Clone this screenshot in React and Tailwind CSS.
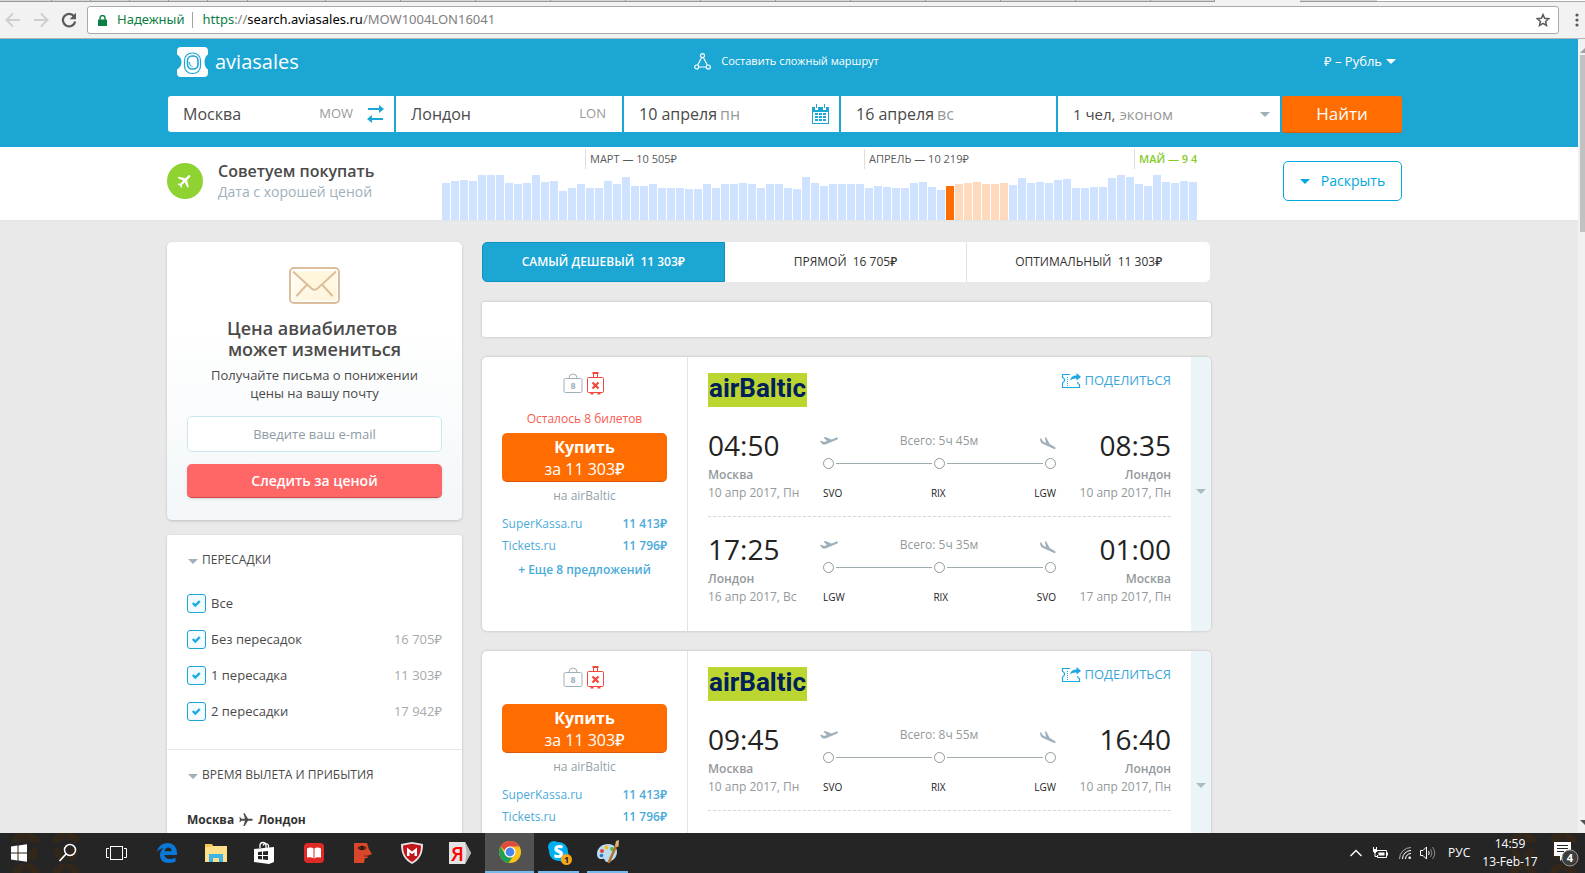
import React from "react";
import clsx from "clsx";

// Bar heights of the price calendar, one per day
const PRICE_BARS = [
  37, 39, 40, 39, 45, 45, 45, 37, 36, 37, 45, 38, 39, 29, 32, 36, 32, 32, 39, 36, 43,
  34, 34, 36, 32, 32, 32, 31, 31, 36, 32, 36, 36, 37, 36, 32, 36, 36, 32, 31, 43, 37,
  34, 36, 36, 36, 36, 32, 34, 33, 32, 32, 37, 38, 33, 30, 34, 36, 37, 38, 36, 36, 37,
  35, 42, 37, 38, 37, 40, 41, 32, 32, 33, 33, 42, 45, 43, 36, 34, 45, 38, 37, 39, 38,
];
const SELECTED_DAY = 56;
const TRIP_LENGTH = 6;

const BROWSER_TABS = [52, 39, 39, 39, 39, 40, 78, 75, 75, 75, 75, 75, 75, 75, 75, 75, 75, 75, 64];

const STOPS = [
  { id: "all", label: "Все" },
  { id: "direct", label: "Без пересадок", price: "16\u00a0705₽" },
  { id: "one", label: "1 пересадка", price: "11\u00a0303₽" },
  { id: "two", label: "2 пересадки", price: "17\u00a0942₽" },
];

const TICKETS = [
  {
    id: 1,
    left: "Осталось 8 билетов",
    segments: [
      {
        from: { time: "04:50", city: "Москва", date: "10 апр 2017, Пн" },
        to: { time: "08:35", city: "Лондон", date: "10 апр 2017, Пн" },
        total: "Всего: 5ч 45м",
        codes: ["SVO", "RIX", "LGW"],
      },
      {
        from: { time: "17:25", city: "Лондон", date: "16 апр 2017, Вс" },
        to: { time: "01:00", city: "Москва", date: "17 апр 2017, Пн" },
        total: "Всего: 5ч 35м",
        codes: ["LGW", "RIX", "SVO"],
      },
    ],
  },
  {
    id: 2,
    segments: [
      {
        from: { time: "09:45", city: "Москва", date: "10 апр 2017, Пн" },
        to: { time: "16:40", city: "Лондон", date: "10 апр 2017, Пн" },
        total: "Всего: 8ч 55м",
        codes: ["SVO", "RIX", "LGW"],
      },
      {
        from: { time: "17:25", city: "Лондон", date: "16 апр 2017, Вс" },
        to: { time: "01:00", city: "Москва", date: "17 апр 2017, Пн" },
        total: "Всего: 5ч 35м",
        codes: ["LGW", "RIX", "SVO"],
      },
    ],
  },
];

const Caret = ({ className }) => (
  <svg className={clsx("h-[5px] w-[10px] shrink-0", className)} viewBox="0 0 10 5" fill="currentColor">
    <path d="M0 0h10L5 5z" />
  </svg>
);

const PlaneIcon = ({ className }) => (
  <svg className={className} viewBox="0 0 24 24" fill="currentColor">
    <path d="M21 16v-2l-8-5V3.500C13 2.670 12.330 2 11.500 2S10 2.670 10 3.500V9l-8 5v2l8-2.500V19l-2 1.500V22l3.500-1 3.500 1v-1.500L13 19v-5.500z" />
  </svg>
);

const BrowserBar = () => (
  <div className="shrink-0 border-b border-[#b4b4b4] bg-[#f2f2f2]">
    <div className="flex h-[2px] overflow-hidden">
      {BROWSER_TABS.map((w, i) => (
        <div key={i} className="shrink-0 border-r border-b border-[#999] bg-[#d6d6d6]" style={{ width: w }} />
      ))}
      <div className="w-[85px] shrink-0" />
      <div className="w-[77px] shrink-0 border-b border-[#999] bg-[#d6d6d6]" />
      <div className="flex-1 border-b border-[#aaa] bg-white" />
    </div>
    <div className="flex h-9 items-center">
      <div className="flex w-[87px] items-center">
        <button aria-label="Назад" className="ml-[5px] text-[#cfcfcf]">
          <svg className="h-4 w-4" viewBox="0 0 16 16" fill="none" stroke="currentColor" strokeWidth="2">
            <path d="M15 8H2M8 1.500 1.500 8 8 14.500" />
          </svg>
        </button>
        <button aria-label="Вперёд" className="ml-3 text-[#cfcfcf]">
          <svg className="h-4 w-4" viewBox="0 0 16 16" fill="none" stroke="currentColor" strokeWidth="2">
            <path d="M1 8h13M8 1.500 14.500 8 8 14.500" />
          </svg>
        </button>
        <button aria-label="Обновить" className="ml-3 text-[#5a5a5a]">
          <svg className="h-4 w-4" viewBox="0 0 16 16" fill="none" stroke="currentColor" strokeWidth="2.200">
            <path d="M13 4.300A6.200 6.200 0 1 0 14.200 9.500" />
            <path d="M15 .8v6.400H8.600z" fill="currentColor" stroke="none" />
          </svg>
        </button>
      </div>
      <div className="flex h-7 flex-1 items-center rounded-[3px] border border-[#a9a9a9] bg-white pl-[10px] pr-2 font-['Noto_Sans','Open_Sans',sans-serif] text-[13px]">
        <svg className="h-[11px] w-[9px] text-[#0b8043]" viewBox="0 0 9 11">
          <path d="M2 5V3a2.500 2.500 0 0 1 5 0v2" fill="none" stroke="currentColor" strokeWidth="1.400" />
          <rect y="4.500" width="9" height="6.500" rx=".6" fill="currentColor" />
        </svg>
        <span className="ml-[10px] text-[#0b8043]">Надежный</span>
        <span className="ml-2 h-4 w-px bg-[#a5a5a5]" />
        <span className="ml-[9px] text-[#808080]">
          <span className="text-[#0b8043]">https</span>://<span className="text-black">search.aviasales.ru</span>
          /MOW1004LON16041
        </span>
        <svg className="ml-auto h-[14px] w-[14px]" viewBox="0 0 14 14" fill="none" stroke="#5a5a5a" strokeWidth="1.500">
          <path d="m7 1.600 1.600 3.700 4 .4-3 2.700.9 4L7 10.300l-3.500 2.100.9-4-3-2.700 4-.4z" />
        </svg>
      </div>
      <button aria-label="Меню" className="ml-[10px] flex w-4 justify-center">
        <svg className="h-[14px] w-1" viewBox="0 0 4 14" fill="#5a5a5a">
          <circle cx="2" cy="2" r="1.600" />
          <circle cx="2" cy="7" r="1.600" />
          <circle cx="2" cy="12" r="1.600" />
        </svg>
      </button>
    </div>
  </div>
);

const SearchHeader = () => (
  <header className="bg-[#1ca6d3] pr-2 text-white">
    <div className="mx-auto h-[108px] max-w-[1234px]">
      <div className="flex h-[57px] items-center pb-3 pl-[9px] pr-[6px]">
        <a href="#" className="flex flex-1 items-center gap-[7px] text-xl">
          <svg className="h-[30px] w-[31px]" viewBox="0 0 31 30">
            <path
              d="M4 0h23a4 4 0 0 1 4 4v3.500c-2 1-3.500 4-3.500 7.500s1.500 6.500 3.500 7.500V26a4 4 0 0 1-4 4H4a4 4 0 0 1-4-4v-3.500c2-1 4.500-4 4.500-7.500S2 8.500 0 7.500V4a4 4 0 0 1 4-4z"
              fill="#fff"
            />
            <rect x="7.500" y="6" width="16" height="20.500" rx="7.500" fill="none" stroke="#1ca6d3" strokeWidth="1.200" />
            <rect x="10.500" y="9" width="10.500" height="13" rx="4.500" fill="none" stroke="#1ca6d3" strokeWidth="1.600" />
            <path d="M12.500 15c0 3 1 4 3 4.500" fill="none" stroke="#1ca6d3" />
          </svg>
          aviasales
        </a>
        <a href="#" className="flex items-center gap-[10px] text-[11px] font-medium">
          <svg className="h-[17px] w-[17px]" viewBox="0 0 17 17" fill="none" stroke="#fff" strokeWidth="1.200">
            <circle cx="8.500" cy="2.700" r="2" />
            <circle cx="2.700" cy="14" r="2" />
            <circle cx="14.300" cy="14" r="2" />
            <path d="M7.600 4.500 3.600 12.200M9.400 4.500l4 7.700M4.700 14h7.600" />
          </svg>
          Составить сложный маршрут
        </a>
        <div className="flex flex-1 items-center justify-end gap-1 text-[13px]">
          <select aria-label="Валюта" className="appearance-none bg-transparent outline-none">
            <option>₽ – Рубль</option>
          </select>
          <Caret />
        </div>
      </div>
      <form className="flex h-[37px] items-start gap-[2px] text-base text-[#4a4a4a]" onSubmit={(e) => e.preventDefault()}>
        <div className="flex h-9 w-[226px] items-center rounded-l-[3px] bg-white pl-[15px] pr-[10px]">
          <input aria-label="Откуда" defaultValue="Москва" className="w-0 flex-1 outline-none" />
          <span className="text-[13px] text-[#999]">MOW</span>
          <button type="button" aria-label="Поменять местами" className="ml-[14px]">
            <svg className="h-[18px] w-[17px]" viewBox="0 0 17 18" fill="none" stroke="#1ca6d3" strokeWidth="2">
              <path d="M1 4h13M3 14h13" />
              <path d="M12 0v8l5-4zM5 10v8l-5-4z" fill="#1ca6d3" stroke="none" />
            </svg>
          </button>
        </div>
        <div className="flex h-9 w-[226px] items-center bg-white pl-[15px] pr-4">
          <input aria-label="Куда" defaultValue="Лондон" className="w-0 flex-1 outline-none" />
          <span className="text-[13px] text-[#999]">LON</span>
        </div>
        <label className="flex h-9 w-[215px] items-center bg-white pl-[15px] pr-[10px]">
          <input aria-label="Туда" defaultValue="10 апреля" className="field-sizing-content outline-none" />
          <span className="ml-[3px] flex-1 text-[#999]">пн</span>
          <svg className="h-5 w-[17px]" viewBox="0 0 17 20" fill="#1ca6d3">
            <path d="M0 3h3v3h3V3h5v3h3V3h3v17H0zm1 5v11h15V8z" fillRule="evenodd" />
            <path d="M4 0h1v4H4zM12 0h1v4h-1zM3 9h3v2H3zM7 9h3v2H7zM11 9h3v2h-3zM3 12h3v2H3zM7 12h3v2H7zM11 12h3v2h-3zM3 15h3v2H3zM7 15h3v2H7zM11 15h3v2h-3z" />
          </svg>
        </label>
        <label className="flex h-9 w-[215px] items-center bg-white pl-[15px]">
          <input aria-label="Обратно" defaultValue="16 апреля" className="field-sizing-content outline-none" />
          <span className="ml-[3px] text-[#999]">вс</span>
        </label>
        <button type="button" className="flex h-9 flex-1 items-center justify-between bg-white pl-[15px] pr-[10px] text-[15px]">
          <span>
            1 чел, <span className="text-[#999]">эконом</span>
          </span>
          <Caret className="text-[#a0b0bb]" />
        </button>
        <button className="h-[37px] w-[120px] rounded-[3px] border-b border-[#d85a0a] bg-[#ff6d00] text-[17px] font-medium text-white">
          Найти
        </button>
      </form>
    </div>
  </header>
);

const PriceCalendar = () => (
  <section className="border-b border-[#e1e6e7] bg-white pr-2">
    <div className="mx-auto flex h-[73px] max-w-[1236px]">
      <div className="flex w-[275px] items-start pt-4">
        <div className="flex h-9 w-9 items-center justify-center rounded-full bg-[#8fd333]">
          <PlaneIcon className="h-[18px] w-[18px] rotate-45 text-white" />
        </div>
        <div className="-mt-[2px] ml-[15px]">
          <p className="text-base leading-5 font-semibold text-[#4a4a4a]">Советуем покупать</p>
          <p className="text-sm leading-[21px] text-[#a0b0bb]">Дата с хорошей ценой</p>
        </div>
      </div>
      <div className="flex w-[755px] flex-col justify-between pt-[2px]">
        <div className="flex overflow-hidden pl-[143px] text-[11px] leading-5 whitespace-nowrap text-[#5a5a5a]">
          <span className="h-5 w-[279px] shrink-0 border-l border-[#dedede] pl-1">МАРТ — 10&nbsp;505₽</span>
          <span className="h-5 w-[270px] shrink-0 border-l border-[#dedede] pl-1">АПРЕЛЬ — 10&nbsp;219₽</span>
          <span className="h-5 w-[63px] shrink-0 border-l border-[#dedede] pl-1 font-semibold text-[#85cc2a]">
            МАЙ — 9&nbsp;4
          </span>
        </div>
        <div className="flex items-end gap-px">
          {PRICE_BARS.map((h, i) => (
            <div
              key={i}
              className={clsx(
                "flex-1",
                i === SELECTED_DAY
                  ? "bg-[#ff6d00]"
                  : i > SELECTED_DAY && i <= SELECTED_DAY + TRIP_LENGTH
                    ? "bg-[#ffd9bb]"
                    : "bg-[#cfe2ff]"
              )}
              style={{ height: h }}
            />
          ))}
        </div>
      </div>
      <button className="mt-[14px] mr-px ml-auto flex h-10 w-[119px] items-center justify-center gap-[11px] rounded-[5px] border border-[#00a8dd] text-sm text-[#00a8dd]">
        <Caret />
        Раскрыть
      </button>
    </div>
  </section>
);

const Subscribe = () => (
  <form
    className="rounded-[5px] bg-linear-to-b from-white from-30% to-[#f3f7f9] px-5 pt-[25px] pb-[22px] text-center text-[#4a4a4a] shadow-[0_1px_3px_rgba(0,0,0,0.18)]"
    onSubmit={(e) => e.preventDefault()}
  >
    <svg className="mx-auto h-[38px] w-[51px]" viewBox="0 0 51 38" fill="none">
      <defs>
        <linearGradient id="envelope" x1="0" y1="0" x2="1" y2="1">
          <stop offset="0" stopColor="#fffdf6" />
          <stop offset="1" stopColor="#fff3d6" />
        </linearGradient>
      </defs>
      <rect x="1" y="1" width="49" height="35" rx="4" fill="#fff" stroke="#dcbf9a" strokeWidth="2" />
      <rect x="3.500" y="3.500" width="44" height="30" rx="2" fill="url(#envelope)" />
      <path d="M8 28.500 18.500 17M43 28.500 32.500 17" stroke="#dcbf9a" strokeWidth="2" strokeLinecap="round" />
      <path d="M4 4.500 22.500 21.500q3 2.500 6 0L47 4.500" fill="#fff6dc" stroke="#dcbf9a" strokeWidth="2" />
    </svg>
    <h2 className="mt-[13px] text-lg leading-[21px] font-semibold">
      Цена авиабилетов&nbsp;
      <br />
      может измениться
    </h2>
    <p className="mt-[6px] text-[13px] leading-[18px]">
      Получайте письма о понижении
      <br />
      цены на вашу почту
    </p>
    <input
      type="email"
      aria-label="E-mail"
      placeholder="Введите ваш e-mail"
      className="mt-[14px] block h-9 w-full rounded-[5px] border border-[#c9e9f2] bg-white text-center text-[13px] outline-none placeholder:text-[#8e9ca5]"
    />
    <button className="mt-3 block h-[34px] w-full rounded-[5px] border-b border-[#d04848] bg-[#ff6666] text-sm font-semibold text-white shadow-sm">
      Следить за ценой
    </button>
  </form>
);

const Filters = () => (
  <div className="rounded-t-[3px] bg-white text-[13px] leading-[18px] text-[#4a4a4a] shadow-[0_1px_3px_rgba(0,0,0,0.18)]">
    <div className="border-b border-[#e8e8e8] px-5 pt-4 pb-5">
      <h3 className="flex items-center gap-1 pl-px text-xs leading-[18px] font-medium">
        <Caret className="mt-[3px] text-[#a0b0bb]" />
        ПЕРЕСАДКИ
      </h3>
      <div className="mt-4">
        {STOPS.map((stop) => (
          <div key={stop.id} className="flex h-9 items-center">
            <span className="relative mr-[5px] h-[19px] w-[19px]">
              <input
                id={stop.id}
                type="checkbox"
                defaultChecked
                className="block h-[19px] w-[19px] appearance-none rounded-[3px] border border-[#1ca6d3] bg-[#f2fcff]"
              />
              <svg
                className="pointer-events-none absolute inset-0 h-[19px] w-[19px]"
                viewBox="0 0 19 19"
                fill="none"
                stroke="#1cabe0"
                strokeWidth="2.400"
              >
                <path d="m5.800 9 2.500 2.500 4.500-4.500" />
              </svg>
            </span>
            <label htmlFor={stop.id} className="flex-1">
              {stop.label}
            </label>
            {stop.price && <span className="text-[#a6aaad]">{stop.price}</span>}
          </div>
        ))}
      </div>
    </div>
    <div className="px-5 pt-4 pb-12">
      <h3 className="flex items-center gap-1 pl-px text-xs leading-[18px] font-medium">
        <Caret className="mt-[3px] text-[#a0b0bb]" />
        ВРЕМЯ ВЫЛЕТА И ПРИБЫТИЯ
      </h3>
      <p className="mt-[27px] flex items-center gap-1 text-xs leading-[18px] font-bold text-[#333]">
        Москва
        <PlaneIcon className="h-4 w-4 rotate-90 text-[#4a4a4a]" />
        Лондон
      </p>
    </div>
  </div>
);

const BaggageIcons = () => (
  <div className="mb-[14px] flex h-6 items-start justify-center gap-1 pr-[2px]">
    <svg className="h-[22px] w-5" viewBox="0 0 20 22" fill="none" stroke="#a0b0bb">
      <path d="M6 6a4 4 0 0 1 8 0" />
      <rect x="1" y="6.500" width="18" height="14" rx="1.500" />
      <text x="10" y="17" textAnchor="middle" fontSize="9" fontWeight="700" fill="#a0b0bb" stroke="none">
        8
      </text>
    </svg>
    <svg className="h-[23px] w-[17px]" viewBox="0 0 17 23" fill="none" stroke="#f4473b">
      <path d="M5.500 1h6" strokeWidth="2" />
      <path d="M6.500 1v4M10.500 1v4" />
      <rect x=".5" y="5.500" width="16" height="15" rx="1" />
      <path d="M5.500 10.500l6 6M11.500 10.500l-6 6" strokeWidth="2.200" />
      <path d="M3.500 21.500h3M10.500 21.500h3" strokeWidth="2" />
    </svg>
  </div>
);

const Point = () => <span className="h-[11px] w-[11px] shrink-0 rounded-full border border-[#90999d]" />;

const Segment = ({ from, to, total, codes }) => (
  <div className="flex text-xs leading-[18px] text-[#93999c]">
    <div className="w-[112px]">
      <p className="mb-[5px] text-[28px] leading-8 text-[#222]">{from.time}</p>
      <p className="font-semibold">{from.city}</p>
      <p>{from.date}</p>
    </div>
    <div className="flex-1 pt-[3px]">
      <div className="flex items-center justify-between pr-[3px]">
        <svg className="h-[10px] w-[18px] text-[#a0b0bb]" viewBox="0 0 18 10" fill="currentColor">
          <path d="M0 5.200 1.500 4.700 4 6l3-1L3.500 1.600 5.200 1l6.300 2.500L16 1.700c1.200-.4 2 .2 2 .8s-.6 1-1.300 1.300L6 8.200c-1.500.5-3 .4-3.800-.3z" />
        </svg>
        {total}
        <svg className="mt-[3px] h-3 w-4 text-[#a0b0bb]" viewBox="0 0 16 12" fill="currentColor">
          <path d="M.2 1 1.500 1.800 2.800 4.300 6 6 4.800 0l1.600.8L9.700 7l4.800 2.800c1 .6 1.300 1.300 1.100 1.800-.3.500-1.200.5-2 .1L3 7C1.300 6 .4 5 .3 3.800z" />
        </svg>
      </div>
      <div className="mt-2 flex items-center gap-[2px] px-[3px]">
        <Point />
        <span className="h-px flex-1 bg-[#a0abb0]" />
        <Point />
        <span className="h-px flex-1 bg-[#a0abb0]" />
        <Point />
      </div>
      <div className="mt-[15px] flex justify-between px-[3px] text-[10px] text-[#222]">
        {codes.map((code) => (
          <span key={code}>{code}</span>
        ))}
      </div>
    </div>
    <div className="w-[112px] text-right">
      <p className="mb-[5px] text-[28px] leading-8 text-[#222]">{to.time}</p>
      <p className="font-semibold">{to.city}</p>
      <p>{to.date}</p>
    </div>
  </div>
);

const Ticket = ({ left, segments }) => (
  <article className="flex overflow-hidden rounded-[5px] bg-white shadow-[0_0_3px_rgba(0,0,0,0.2)]">
    <div className="w-[206px] shrink-0 border-r border-[#e2e5e6] px-5 pt-[15px] text-center text-xs leading-[18px] text-[#4aabda]">
      <BaggageIcons />
      {left && <p className="mb-[5px] text-[#f95a50]">{left}</p>}
      <button className="block h-[49px] w-full rounded-[5px] border-b border-[#d85a0a] bg-[#ff6d00] pt-[2px] text-base leading-[22px] font-medium text-white">
        <b className="block font-bold">Купить</b>
        за 11&nbsp;303₽
      </button>
      <p className="mt-[5px] text-[#93a1aa]">на airBaltic</p>
      <div className="mt-2 flex justify-between leading-[22px]">
        <a href="#">SuperKassa.ru</a>
        <span className="font-semibold">11&nbsp;413₽</span>
      </div>
      <div className="flex justify-between leading-[22px]">
        <a href="#">Tickets.ru</a>
        <span className="font-semibold">11&nbsp;796₽</span>
      </div>
      <a href="#" className="mt-1 block font-semibold">
        + Еще 8 предложений
      </a>
    </div>
    <div className="flex-1 px-5 pt-4 pb-[25px]">
      <div className="mb-[22px] flex items-start justify-between">
        <div className="flex h-[34px] w-[99px] items-center justify-center bg-[#bcd631] pb-[5px] font-['Roboto',sans-serif] text-[26px] leading-7 font-bold text-[#00205b]">
          airBaltic
        </div>
        <a href="#" className="flex items-start gap-[3px] text-[13px] leading-[15px] text-[#3aa6da]">
          <svg className="h-[16px] w-[20px]" viewBox="0 0 20 16" fill="none" stroke="#1ca6e3">
            <path
              d="M9 1.500H1.500v3q2 .5 2 2.500t-2 3v4.500h17v-3q-2-.5-2-2.500"
              strokeWidth="1.200"
            />
            <path d="M6.500 4v9" strokeDasharray="1 1" />
            <path d="M9 7.500Q10 2.500 15.500 2.500V0L20 4l-4.500 3.500V5.500Q11.500 5 9 7.500z" fill="#1ca6e3" stroke="none" />
          </svg>
          ПОДЕЛИТЬСЯ
        </a>
      </div>
      {segments.map((segment, i) => (
        <div key={i} className={clsx(i > 0 && "mt-[14px] border-t border-dashed border-[#cfdbe0] pt-4")}>
          <Segment {...segment} />
        </div>
      ))}
    </div>
    <button aria-label="Подробнее" className="flex w-5 items-center justify-center bg-[#ebf5f7] pb-[6px]">
      <Caret className="text-[#a9bcc6]" />
    </button>
  </article>
);

const Results = () => (
  <main className="w-[729px]">
    <div role="tablist" className="mr-px grid h-10 grid-cols-3 text-xs text-[#333]">
      <button
        role="tab"
        aria-selected="true"
        className="rounded-l-[5px] border border-[#0f92c0] bg-[#1ca6d3] font-semibold text-white"
      >
        САМЫЙ ДЕШЕВЫЙ&nbsp; 11&nbsp;303₽
      </button>
      <button role="tab" aria-selected="false" className="border-r border-[#e2e2e2] bg-white font-medium">
        ПРЯМОЙ&nbsp; 16&nbsp;705₽
      </button>
      <button role="tab" aria-selected="false" className="rounded-r-[5px] bg-white font-medium">
        ОПТИМАЛЬНЫЙ&nbsp; 11&nbsp;303₽
      </button>
    </div>
    <div className="mt-5 h-[35px] rounded-[3px] bg-white shadow-[0_0_3px_rgba(0,0,0,0.2)]" />
    <div className="mt-5 flex flex-col gap-5">
      {TICKETS.map((ticket) => (
        <Ticket key={ticket.id} {...ticket} />
      ))}
    </div>
  </main>
);

const Leaves = ({ className }) => (
  <svg className={clsx("h-10 w-7 shrink-0", className)} viewBox="0 0 28 40" fill="#33271a">
    <ellipse cx="7" cy="5" rx="7" ry="4" transform="rotate(-30 7 5)" />
    <ellipse cx="21" cy="5" rx="7" ry="4" transform="rotate(30 21 5)" />
    <ellipse cx="7" cy="21" rx="7" ry="4" transform="rotate(60 7 21)" />
    <ellipse cx="21" cy="21" rx="7" ry="4" transform="rotate(-60 21 21)" />
    <ellipse cx="7" cy="36" rx="7" ry="4" transform="rotate(-40 7 36)" />
    <ellipse cx="21" cy="36" rx="7" ry="4" transform="rotate(40 21 36)" />
    <path d="M13.500 0h1v40h-1z" />
  </svg>
);

const TaskButton = ({ label, running, active, children }) => (
  <button aria-label={label} className={clsx("flex h-10 w-[49px] shrink-0", active && "bg-[#525252]", running && "px-1")}>
    <span
      className={clsx(
        "flex h-10 flex-1 items-center justify-center",
        (running || active) && "border-b-2 border-[#76b9ed]"
      )}
    >
      <svg className="h-7 w-7" viewBox="0 0 28 28">
        {children}
      </svg>
    </span>
  </button>
);

const Taskbar = () => (
  <footer className="relative flex h-10 shrink-0 items-center overflow-hidden bg-[#252525] font-['Open_Sans',sans-serif] text-white">
    <div className="pointer-events-none absolute inset-0 flex">
      <Leaves className="ml-3" />
      <Leaves className="ml-3" />
      <Leaves className="ml-auto" />
      <Leaves className="mr-2 ml-3" />
    </div>
    <div className="relative -ml-[5px] flex flex-1">
      <TaskButton label="Пуск">
        <path d="M5 7.500 11.500 6.600v6.900H5zM12.500 6.400 21 5.200v8.300h-8.500zM5 14.500h6.500v6.900L5 20.500zM12.500 14.500H21v8.300l-8.500-1.200z" fill="#fff" />
      </TaskButton>
      <TaskButton label="Поиск">
        <circle cx="15" cy="11" r="5.500" fill="none" stroke="#fff" strokeWidth="1.500" />
        <path d="M11 15 4.500 22" stroke="#fff" strokeWidth="1.800" />
      </TaskButton>
      <TaskButton label="Представление задач">
        <rect x="6.500" y="7.500" width="12" height="13" fill="none" stroke="#fff" />
        <path d="M5 9.500H2.500v9H5M20 9.500h2.500v9H20" fill="none" stroke="#fff" />
      </TaskButton>
      <TaskButton label="Edge">
        <path
          d="M4 13C5 7.500 9 4 14.500 4 20 4 24 8 24 14v2H11.500c.2 2.600 2.300 4 5.300 4 2.200 0 4-.6 5.700-1.600v4.200C20.700 23.600 18.500 24 16 24c-5.500 0-9-3-9-8 0-3 1.500-5.500 4-7C7.500 9.500 5.500 11 4 13zm7.700-.8h7c0-2.200-1.200-3.600-3.400-3.600-2 0-3.300 1.400-3.600 3.600z"
          fill="#0a78d8"
        />
      </TaskButton>
      <TaskButton label="Проводник">
        <path d="M3 5h7l1 2h14v16H3z" fill="#ffe08a" />
        <path d="M3 5h7v3H3z" fill="#f5c853" />
        <path d="M7 23v-8h14v8h-4v-4h-6v4z" fill="#3cb4e5" />
      </TaskButton>
      <TaskButton label="Магазин">
        <path d="M9 9V6.500a3 3 0 0 1 6 0V9M12 6.500a3 3 0 0 1 5.500 0V9" fill="none" stroke="#fff" strokeWidth="1.300" />
        <path d="m3 10 20-2v15l-5 2-15-2z" fill="#fff" />
        <path d="m7 13 4-.4v3.400H7zM12 12.500l5-.5v4h-5zM7 17h4v3.400l-4-.4zM12 17h5v4l-5-.5z" fill="#252525" />
      </TaskButton>
      <TaskButton label="Книги">
        <rect x="4" y="4" width="20" height="20" rx="4" fill="#df2a25" />
        <path d="M7 9.500q4-2 7 .5 3-2.500 7-.5v9q-4-1-7 1-3-2-7-1z" fill="#fff" />
        <path d="M14 10v9.500" stroke="#df2a25" />
      </TaskButton>
      <TaskButton label="FineReader">
        <path d="M5 4h13q1 6 5 11l-5 2 1 2h-3l-1 5H5z" fill="#d9472b" />
        <path d="M9 9q4-3.500 8 0-4 3.500-8 0z" fill="#a5321e" stroke="#2a1410" />
        <circle cx="13" cy="9" r="1.500" fill="#2a1410" />
        <path d="M15 17h5" stroke="#7d2416" />
      </TaskButton>
      <TaskButton label="McAfee">
        <path d="m3 5 11-2 11 2c0 10-3 15.500-11 20C6 20.500 3 15 3 5z" fill="#e6e6e6" />
        <path d="m5 6.500 9-1.700 9 1.700c0 8-2.500 12.500-9 16.500C7.500 19 5 14.500 5 6.500z" fill="#c4161d" />
        <path d="M9 17V8.500l5 4 5-4V17h-2.500v-3.800L14 15.200l-2.500-2V17z" fill="#fff" />
      </TaskButton>
      <TaskButton label="Яндекс">
        <path d="M2 3h16l6 11-6 11H2z" fill="#e4e4e4" />
        <path d="m18 3 6 11-6 11 1.500-11z" fill="#b4b4b4" />
        <text x="10.500" y="22" textAnchor="middle" fontSize="20" fontWeight="600" fill="#f00">
          Я
        </text>
      </TaskButton>
      <TaskButton label="Chrome" active>
        <circle cx="14" cy="14" r="11" fill="#fbc116" />
        <path d="M4.500 8.500A11 11 0 0 1 23.500 8.500H14a5.500 5.500 0 0 0-5 4z" fill="#dd4b3e" />
        <path d="M4.500 8.500a11 11 0 0 0 8 16.400L17 18.500a5.500 5.500 0 0 1-7.800-1.800z" fill="#1e9e58" />
        <circle cx="14" cy="14" r="5.600" fill="#fff" />
        <circle cx="14" cy="14" r="4.400" fill="#4a86ee" />
      </TaskButton>
      <TaskButton label="Skype" running>
        <circle cx="9" cy="9" r="6" fill="#00aff0" />
        <circle cx="18" cy="18" r="6" fill="#00aff0" />
        <circle cx="13.500" cy="13.500" r="9.500" fill="#00aff0" />
        <text x="13.500" y="19.500" textAnchor="middle" fontSize="17" fontWeight="800" fill="#fff">
          S
        </text>
        <circle cx="21.500" cy="21.500" r="5.500" fill="#f9a61a" />
        <text x="21.500" y="25" textAnchor="middle" fontSize="9" fontWeight="700" fill="#222">
          1
        </text>
      </TaskButton>
      <TaskButton label="Paint" running>
        <path d="M3 16C3 10 8 6 14 6s9 4 9 8-3 9-9 10c-3 .5-3-2-4-3s-2 .5-4 0-3-2.500-3-5z" fill="#b9dcf0" />
        <circle cx="8" cy="13" r="2" fill="#e2433a" />
        <circle cx="12.500" cy="9.500" r="2" fill="#f5b921" />
        <circle cx="18" cy="11" r="2" fill="#58b947" />
        <circle cx="7.500" cy="17.500" r="1.800" fill="#2f74c9" />
        <path d="M22.500 7 15 24" stroke="#b5702b" strokeWidth="2.500" strokeLinecap="round" />
        <path d="m21 8 1-5 3-1-.5 7z" fill="#e3b57c" />
      </TaskButton>
    </div>
    <div className="relative flex items-center text-xs">
      <svg className="h-2 w-3" viewBox="0 0 12 8" fill="none" stroke="#fff" strokeWidth="1.400">
        <path d="M.5 7 6 1.500 11.500 7" />
      </svg>
      <svg className="ml-[10px] h-3 w-4" viewBox="0 0 16 12" fill="none" stroke="#fff">
        <path d="M5 4.500V3.500h9.500v7h-9V8" />
        <path d="M15 5.500h1v3h-1zM6.500 5.500h6v3h-6zM1 2h4v3H4v1H2V5H1z" fill="#fff" stroke="none" />
        <path d="M1.500 0v2M4.500 0v2M3 6v3.500h3" />
      </svg>
      <svg className="ml-[11px] h-3 w-3" viewBox="0 0 12 12" fill="none" stroke="#fff">
        <path d="M.5 12A11.500 11.500 0 0 1 12 .5" stroke="#aaa" />
        <path d="M3.500 12A8.500 8.500 0 0 1 12 3.500M6.500 12A5.500 5.500 0 0 1 12 6.500" />
        <circle cx="10.700" cy="10.700" r="1.300" fill="#fff" stroke="none" />
      </svg>
      <svg className="ml-[9px] h-[14px] w-4" viewBox="0 0 16 14" fill="none" stroke="#fff">
        <path d="M.5 4.500h2.500l3.500-3.500v12L3 9.500H.5z" />
        <path d="M8.500 5q1.500 2 0 4" />
        <path d="M10.500 3q3 4 0 8M12.500 1q4.500 6 0 12" stroke="#8a8a8a" />
      </svg>
      <span className="ml-3 w-[22px]">РУС</span>
      <div className="ml-[10px] w-[60px] text-center leading-[18px] whitespace-nowrap">
        <p>14:59</p>
        <p>13-Feb-17</p>
      </div>
      <button aria-label="Центр уведомлений" className="mr-[6px] ml-[13px]">
        <svg className="h-7 w-[26px]" viewBox="0 0 26 28">
          <path d="M1 3h17v14h-6l-5 5v-5H1z" fill="#fff" />
          <path d="M4 6.500h11M4 9.500h11M4 12.500h7" stroke="#252525" />
          <circle cx="17" cy="19" r="8" fill="#3d3d3d" stroke="#999" />
          <text x="17" y="23" textAnchor="middle" fontSize="11" fontWeight="700" fill="#fff">
            4
          </text>
        </svg>
      </button>
    </div>
  </footer>
);

const App = () => {
  return (
    <div className="flex h-screen flex-col overflow-hidden bg-[#e9e9e9] font-['Open_Sans','Noto_Sans',sans-serif]">
      <BrowserBar />
      <div className="flex min-h-0 flex-1">
        <div className="flex-1 overflow-hidden">
          <SearchHeader />
          <PriceCalendar />
          <div className="pt-[21px] pr-2">
            <div className="mx-auto flex max-w-[1236px] items-start gap-5">
              <aside className="flex w-[295px] flex-col gap-[15px]">
                <Subscribe />
                <Filters />
              </aside>
              <Results />
            </div>
          </div>
        </div>
        {/* page scrollbar, cut by the window edge */}
        <div className="flex w-[7px] flex-col justify-between overflow-hidden bg-[#f1f1f1] pt-[9px] pb-2 pl-[2px]">
          <div>
            <Caret className="rotate-180 text-[#a0a0a0]" />
            <div className="mt-[2px] h-[177px] bg-[#c1c1c1]" />
          </div>
          <Caret className="text-[#505050]" />
        </div>
      </div>
      <Taskbar />
    </div>
  );
};

export default App;
